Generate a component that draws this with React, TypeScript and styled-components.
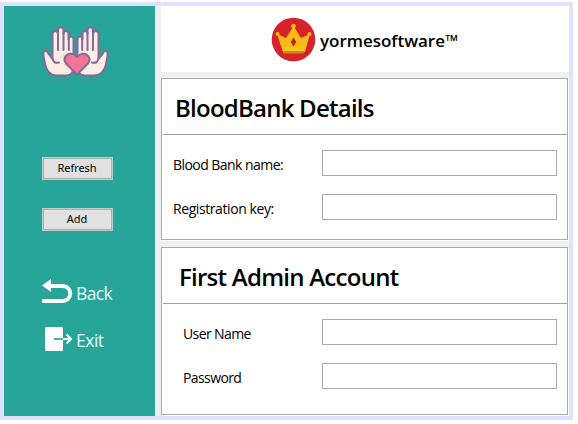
import React from 'react';
import styled, { createGlobalStyle } from 'styled-components';

const GlobalStyle = createGlobalStyle`
  * { box-sizing: border-box; }
  body { margin: 0; background: #fff; font-family: "Open Sans", "Noto Sans", sans-serif; color: #000; }
`;

const Window = styled.div`
  width: 573px;
  height: 418px;
  margin-top: 2px;
  border: 4px solid #e0e0ff;
  background: #f0f0f0;
  display: flex;
  gap: 6px;
`;

const Sidebar = styled.aside`
  width: 151px;
  background: #27a599;
  display: flex;
  flex-direction: column;
  align-items: flex-start;
  padding: 18px 0 0 38px;
`;

const HandsIcon = styled.svg`
  display: block;
  width: 68px;
  height: 60px;
  margin-bottom: 73px;
`;

const Button = styled.button`
  width: 71px;
  height: 23px;
  padding: 0 1px 1px 0;
  margin-bottom: 28px;
  border: 1px solid #b9cfcc;
  box-shadow: inset 0 0 0 1px #adadad;
  background: #e1e1e1;
  color: #000;
  font: 11px/20px "Noto Sans", sans-serif;
  letter-spacing: -0.07px;
`;

const NavLink = styled.a<{ $gap: number; $spacing: number }>`
  display: flex;
  align-items: center;
  height: 30px;
  margin-top: ${p => p.$gap}px;
  color: #e6faf7;
  font-size: 17.5px;
  font-weight: 400;
  line-height: 30px;
  letter-spacing: ${p => p.$spacing}px;
  white-space: nowrap;

  svg { width: 34px; height: 30px; flex: none; }
  span { padding-top: 2px; }
`;

const Main = styled.main`
  flex: 1;
  display: flex;
  flex-direction: column;
`;

const Header = styled.header`
  height: 66px;
  background: #fff;
  display: flex;
  align-items: center;
  padding: 1px 0 0 110px;
  gap: 4px;
`;

const Brand = styled.span`
  font-size: 17px;
  font-weight: 600;
  line-height: 24px;
  letter-spacing: -0.02px;
  padding-top: 2px;
`;

const Panel = styled.section<{ $height: number; $top: number }>`
  width: 407px;
  height: ${p => p.$height}px;
  margin-top: ${p => p.$top}px;
  border: 1px solid #a9a9ac;
  background: #fff;
  box-shadow: 1px 1px 0 #fff;
  padding: 0 0 0 1px;
`;

const Title = styled.h1<{ $indent: number; $spacing: number }>`
  height: 56px;
  margin: 0;
  padding: 2px 0 0 ${p => p.$indent}px;
  border-bottom: 1px solid #a0a0a0;
  font-size: 24px;
  font-weight: 600;
  line-height: 54px;
  letter-spacing: ${p => p.$spacing}px;
  white-space: nowrap;
`;

const Fields = styled.div<{ $indent: number }>`
  display: flex;
  flex-direction: column;
  gap: 18px;
  padding: 15px 10px 0 ${p => p.$indent}px;
`;

const Field = styled.label<{ $spacing: number }>`
  display: flex;
  align-items: center;
  justify-content: space-between;
  height: 26px;
  font-size: 14px;
  line-height: 24px;
  letter-spacing: ${p => p.$spacing}px;
  white-space: nowrap;

  span { padding-top: 3px; }
`;

const Input = styled.input`
  width: 235px;
  height: 26px;
  padding: 0 4px;
  border: 1px solid #a9a9a9;
  background: #fff;
  font: inherit;
  outline: none;
`;

function Hand() {
  return (
    <>
      <path
        d="M1.500 32C0.500 26 5 25 6.500 30L10.500 35V10C10.500 6 16 6 16 10V6.500C16 2 21.500 2 21.500 6.500V10C21.500 6 26.500 6 26.500 10V15C26.500 11.500 31.500 11.500 31.500 15V43C31.500 48 29 51.500 24 51.500H15C8 51.500 4 46 3 40Z"
        fill="#fbeee3"
        stroke="#84699a"
        strokeWidth="2"
        strokeLinejoin="round"
      />
      <path d="M16 9V26M21.500 9V26M26.800 14V26M10.500 34C11 38 13 39.500 17 38.500" fill="none" stroke="#84699a" strokeWidth="2" strokeLinecap="round" />
      <path d="M30.500 29C20 25 17 36 24 42L30.500 48Z" fill="#f3ddc5" />
    </>
  );
}

export default function App() {
  return (
    <>
      <GlobalStyle />
      <Window>
        <Sidebar>
          <HandsIcon viewBox="0 0 68 60">
            <Hand />
            <g transform="translate(67 0) scale(-1 1)"><Hand /></g>
            <path d="M35 50.500L24 39.500C18.500 32.500 29 25.500 35 33C41 25.500 51.500 32.500 46 39.500Z" fill="#f27598" stroke="#84699a" strokeWidth="2" strokeLinejoin="round" />
            <path d="M10 56H30M42 56H62" stroke="#707e99" strokeWidth="3" strokeDasharray="2 3.500" opacity=".65" />
          </HandsIcon>
          <Button>Refresh</Button>
          <Button>Add</Button>
          <NavLink $gap={18} $spacing={-0.6}>
            <svg viewBox="0 0 34 30">
              <path d="M7 9H20C31 9 31 24 20 24H0" fill="none" stroke="#fff" strokeWidth="4" />
              <path d="M0 8.500L9 2V15Z" fill="#fff" />
            </svg>
            <span>Back</span>
          </NavLink>
          <NavLink $gap={17} $spacing={-0.5}>
            <svg viewBox="0 0 34 30">
              <rect x="3" y="3" width="18" height="24" rx="1.500" fill="#fff" />
              <path d="M12 15H21" stroke="#27a599" strokeWidth="1.700" />
              <path d="M21 15H28M24.500 10.500L29 15L24.500 19.500" fill="none" stroke="#fff" strokeWidth="2" />
            </svg>
            <span>Exit</span>
          </NavLink>
        </Sidebar>
        <Main>
          <Header>
            <svg width="45" height="45" viewBox="0 0 45 45">
              <circle cx="22.500" cy="22.500" r="21.800" fill="#d6222a" />
              <path d="M6 17L12 35H34L39 17L30 21L22.500 9L15 21Z" fill="#f9b916" />
              <path d="M11.500 32L12.500 36.500H32.500L33.500 32Z" fill="#c98a20" />
              <path d="M11 30L12 34H33L34 30Z" fill="#fcc51a" />
              <circle cx="6.500" cy="17" r="2" fill="#f9b916" />
              <circle cx="38.500" cy="17" r="2" fill="#f9b916" />
              <circle cx="22.500" cy="9" r="2.300" fill="#f9b916" />
              <path d="M22.500 20.500L25.300 25L22.500 29.500L19.700 25Z" fill="#b8262c" />
            </svg>
            <Brand>yormesoftware™</Brand>
          </Header>
          <Panel $height={162} $top={6}>
            <Title $indent={12} $spacing={-0.76}>BloodBank Details</Title>
            <Fields $indent={10}>
              <Field $spacing={-0.55}><span>Blood Bank name:</span><Input /></Field>
              <Field $spacing={-0.42}><span>Registration key:</span><Input /></Field>
            </Fields>
          </Panel>
          <Panel $height={168} $top={7}>
            <Title $indent={16} $spacing={-0.74}>First Admin Account</Title>
            <Fields $indent={20}>
              <Field $spacing={-0.6}><span>User Name</span><Input /></Field>
              <Field $spacing={-0.6}><span>Password</span><Input type="password" /></Field>
            </Fields>
          </Panel>
        </Main>
      </Window>
    </>
  );
}
